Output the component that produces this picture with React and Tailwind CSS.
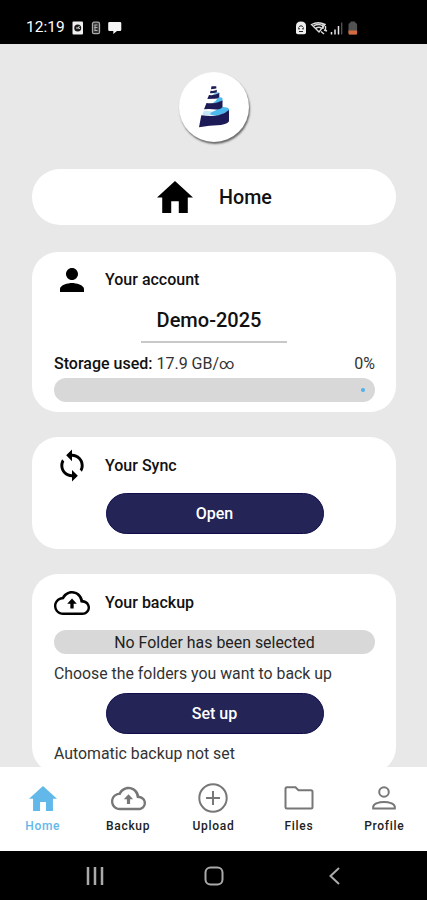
const cloud =
  'M19.35 10.04C18.67 6.59 15.64 4 12 4 9.11 4 6.6 5.64 5.35 8.04 2.34 8.36 0 10.91 0 14c0 3.31 2.69 6 6 6h13c2.76 0 5-2.24 5-5 0-2.64-2.05-4.78-4.65-4.96zM19 18.4H6c-2.4 0-4.4-2-4.4-4.4 0-2.25 1.63-4.1 3.86-4.35l1.07-.11.5-.95C8.08 6.76 9.94 5.6 12 5.6c2.62 0 4.88 1.86 5.39 4.63l.3 1.5 1.53.11c1.76.1 3.18 1.41 3.18 3.16 0 1.85-1.55 3.4-3.4 3.4z'

function CloudUp({ className }) {
  return (
    <svg viewBox="0 0 24 24" fill="currentColor" className={className}>
      <path d={cloud} />
      <path d="M8.800 12.500 12 9l3.200 3.500h-2.100v3.200h-2.200v-3.200z" />
    </svg>
  )
}

function House({ className }) {
  return (
    <svg viewBox="2 3 20 17" preserveAspectRatio="none" fill="currentColor" className={className}>
      <path d="M9.900 20v-6.200h4.200V20h5v-8.300H22L12 3 2 11.700h2.900V20z" />
    </svg>
  )
}

function Person({ className }) {
  return (
    <svg viewBox="0 0 24 24" fill="currentColor" className={className}>
      <path d="M12 12c2.210 0 4-1.790 4-4s-1.790-4-4-4-4 1.790-4 4 1.790 4 4 4zm0 2c-2.670 0-8 1.340-8 4v2h16v-2c0-2.660-5.330-4-8-4z" />
    </svg>
  )
}

function Sync({ className }) {
  return (
    <svg viewBox="0 0 24 24" fill="currentColor" className={className}>
      <path d="M12 4V1L8 5l4 4V6c3.310 0 6 2.690 6 6 0 1.010-.25 1.970-.7 2.800l1.460 1.460C19.540 15.030 20 13.570 20 12c0-4.420-3.580-8-8-8zm0 14c-3.310 0-6-2.690-6-6 0-1.010.25-1.970.7-2.800L5.240 7.740C4.460 8.970 4 10.430 4 12c0 4.420 3.580 8 8 8v3l4-4-4-4v3z" />
    </svg>
  )
}

function Logo() {
  return (
    <svg viewBox="0 0 70 70" className="size-[70px]">
      <path fill="#c5e6f6" d="M25 38.700L34 39.500L38 43.300H23z" />
      <path fill="#4db9ec" d="M32 40.500Q37 39 41 35.300Q48 34.500 50 37V38.800L39 44L31 42.500z" />
      <path fill="#4db9ec" d="M34 30.500Q37.500 29 39 25.500Q42.500 24.800 43.500 26.500V29.300L37 31.500z" />
      <path fill="#7cc3e8" d="M34 22.500L37 20L40.300 20.500V22L36 23.500z" />
      <path fill="#1d1b57" d="M22.300 43.300Q33 44.500 39.500 43.300Q46 41.500 50 38V49.300Q48.500 52 42 53Q30 53.500 20 55.300z" />
      <path fill="#1d1b57" d="M27.500 31Q37 32 43.500 28.500V35.300Q41 37.800 37 37.500Q31 36.500 25 37.200z" />
      <path fill="#1d1b57" d="M30 23Q36 23.700 40.300 21V25.300Q38 27 35 26.800L28.300 27z" />
      <path fill="#1d1b57" d="M32.500 14.300h4.800v2.200l-5.300.8zM31.500 18.800q4 .5 6.300-1v2.500q-3 1.300-6.800 1z" />
    </svg>
  )
}

function StatusBar() {
  return (
    <header className="flex h-[44px] shrink-0 items-center bg-black pl-[26px] pr-[69px] pt-[11px] text-white">
      <span className="w-[39px] text-[15.500px]">12:19</span>
      <svg viewBox="0 0 50 14" className="ml-[7px] h-[14px] w-[50px]">
        <rect x="0.500" y="0.500" width="10.500" height="13" rx="1" fill="#f0f0f0" />
        <circle cx="5.700" cy="7" r="3.500" fill="#1a1a1a" />
        <path d="M4 7h2l1.500-2M6 7l2 .5" stroke="#ddd" fill="none" />
        <rect x="20.500" y="1.200" width="7" height="11.500" rx="1.500" fill="#333" stroke="#aaa" strokeWidth="1.300" />
        <path d="M22.500 4h3M22.500 6.500h3M22.500 9.500h3M23 4v6" stroke="#bbb" strokeWidth="0.900" />
        <path d="M37.500 1h10.500q1.300 0 1.300 1.300v6.400q0 1.300-1.300 1.300h-3l-3.700 3v-3h-3.800q-1.300 0-1.300-1.300V2.300q0-1.300 1.300-1.300z" fill="#f5f5f5" />
      </svg>
      <svg viewBox="0 0 63 14" className="ml-auto h-[14px] w-[63px]">
        <path d="M1 5Q1 .5 6 .5T11 5v6.500q0 1.800-1.800 1.800H2.800Q1 13.300 1 11.500z" fill="#eee" />
        <path d="M3.500 6.500q2.500-3.500 5 0M3 7.800h2M7 7.800h2M4 10.500h4" stroke="#222" fill="none" />
        <path d="M16.500 3.500Q23 0 30 3.500L24 11zM19 4.700q5-2.500 9 .3M21 7.200q3-2 5.500 0" fill="none" stroke="#ddd" strokeWidth="1.400" />
        <path d="M28 3v5M30.500 5v5M26 10.500l3 2.500M29 9l3 1" stroke="#ddd" strokeWidth="1.400" />
        <path d="M36.500 11v2.500M40 8.500v5M43.500 5v8.500" stroke="#e8e8e8" strokeWidth="1.500" />
        <path d="M46.700 1.500v12" stroke="#555" strokeWidth="1.300" />
        <path d="M53.500 3.500q0-1.500 1.500-1.500l.8-1.500h4l.8 1.500q1.500 0 1.500 1.500v8.500q0 1.500-1.500 1.500H55q-1.500 0-1.500-1.500z" fill="#525252" />
        <path d="M53.500 9.500h8.600v3q0 1-1 1h-6.600q-1 0-1-1z" fill="#d56a40" />
      </svg>
    </header>
  )
}

function CardTitle({ icon, children }) {
  return (
    <div className="flex items-center gap-[15px]">
      {icon}
      <h2 className="text-[16px] font-medium leading-5">{children}</h2>
    </div>
  )
}

function Action({ children }) {
  return (
    <button className="ml-[51.500px] flex h-[41px] w-[218px] items-center justify-center rounded-full border border-[#100d4d] bg-[#242556] text-[16px] font-medium text-white">
      {children}
    </button>
  )
}

const tabs = [
  { label: 'Home', icon: <House className="h-[25px] w-[28px]" /> },
  { label: 'Backup', icon: <CloudUp className="size-[35px]" /> },
  {
    label: 'Upload',
    icon: (
      <svg viewBox="0 0 30 30" className="size-[30px]" fill="none" stroke="currentColor" strokeWidth="2">
        <circle cx="15" cy="15" r="13.700" />
        <path d="M15 8v14M8 15h14" />
      </svg>
    ),
  },
  {
    label: 'Files',
    icon: (
      <svg viewBox="0 0 30 24" className="h-[24px] w-[30px]" fill="none" stroke="currentColor" strokeWidth="2">
        <path d="M3 1.200h8.500l3 3H27q1.500 0 1.500 1.500V21q0 1.500-1.500 1.500H3q-1.500 0-1.500-1.500V2.700Q1.500 1.200 3 1.200z" />
      </svg>
    ),
  },
  {
    label: 'Profile',
    icon: (
      <svg viewBox="0 0 24 24" className="size-[24px]" fill="none" stroke="currentColor" strokeWidth="2">
        <circle cx="12" cy="6" r="4.800" />
        <path d="M1.200 22.500V20.500C1.800 17.500 7 15.900 12 15.900s10.200 1.600 10.800 4.600v2z" />
      </svg>
    ),
  },
]

export default function App() {
  return (
    <div className="flex h-[900px] w-[427px] flex-col overflow-hidden bg-black font-[Roboto,sans-serif] text-[#111]">
      <StatusBar />
      <main className="flex min-h-0 flex-1 flex-col overflow-hidden bg-[#e8e8e8] pl-8 pr-[31px] pt-[28px]">
        <div className="mx-auto size-[70px] shrink-0 rounded-full bg-white shadow-[1px_2px_2px_rgba(0,0,0,0.55)]">
          <Logo />
        </div>
        <section className="mt-[27px] flex h-[56px] shrink-0 items-center rounded-[28px] bg-white pl-[125px]">
          <House className="h-[32px] w-[36px] text-black" />
          <h1 className="ml-[26px] pt-[2px] text-[19.700px] font-medium">Home</h1>
        </section>
        <section className="mt-[27px] h-[160px] shrink-0 rounded-[26px] bg-white pl-[22px] pr-[21px] pt-[10px]">
          <CardTitle icon={<Person className="size-[36px] text-black" />}>Your account</CardTitle>
          <div className="ml-[87px] mt-[8px] w-[146px] border-b-2 border-[#c8c8c8] pb-[7px] pr-[10px] text-center text-[20px] font-medium leading-[28px]">
            Demo-2025
          </div>
          <div className="mt-[11px] flex justify-between text-[16px] leading-5">
            <p>
              <span className="font-medium">Storage used:</span> <span className="text-[#333]">17.9 GB/<span className="text-[15px]">∞</span></span>
            </p>
            <span className="text-[#333]">0%</span>
          </div>
          <div className="mt-[4px] flex h-6 items-center justify-end rounded-full bg-[#d8d8d8] pr-[10px]">
            <span className="size-[4px] rounded-full bg-[#4eb0e8]" />
          </div>
        </section>
        <section className="mt-[25px] h-[112px] shrink-0 rounded-[26px] bg-white pl-[22px] pr-[21px] pt-[11px]">
          <CardTitle icon={<Sync className="h-[35px] w-[36px] text-black" />}>Your Sync</CardTitle>
          <div className="mt-[10px]">
            <Action>Open</Action>
          </div>
        </section>
        <section className="mt-[25px] h-[199px] shrink-0 rounded-[26px] bg-white pl-[22px] pr-[21px] pt-[11px]">
          <CardTitle icon={<CloudUp className="size-[36px] text-black" />}>Your backup</CardTitle>
          <div className="mt-[9px] h-6 rounded-full bg-[#d8d8d8] text-center text-[15.900px] leading-[25px] text-[#222]">
            No Folder has been selected
          </div>
          <p className="mb-[9px] mt-[10px] text-[15.850px] leading-5 text-[#333]">Choose the folders you want to back up</p>
          <Action>Set up</Action>
          <p className="mt-[10px] text-[15.850px] leading-5 text-[#333]">Automatic backup not set</p>
        </section>
      </main>
      <nav className="grid h-[84px] shrink-0 grid-cols-5 bg-white pt-[14px]">
        {tabs.map((tab, i) => (
          <div key={tab.label} className={i === 0 ? 'flex flex-col items-center text-[#63b8ea]' : 'flex flex-col items-center text-[#777]'}>
            <div className="flex h-[34px] items-center">{tab.icon}</div>
            <span className={i === 0 ? 'mt-[3px] text-[12px] font-medium leading-[17px] tracking-[0.7px]' : 'mt-[3px] text-[12px] font-medium leading-[17px] tracking-[0.7px] text-[#222]'}>
              {tab.label}
            </span>
          </div>
        ))}
      </nav>
      <footer className="flex h-[49px] shrink-0 items-center justify-between bg-black pl-[86px] pr-[87px] text-[#aaa]">
        <svg viewBox="0 0 18 20" className="h-5 w-[18px]" stroke="currentColor" strokeWidth="2.500">
          <path d="M2 1v18M9 1v18M16 1v18" />
        </svg>
        <svg viewBox="0 0 20 20" className="mr-1 size-5" fill="none" stroke="currentColor" strokeWidth="2">
          <rect x="1.500" y="1.500" width="17" height="17" rx="5" />
        </svg>
        <svg viewBox="0 0 12 20" className="h-5 w-3" fill="none" stroke="currentColor" strokeWidth="2">
          <path d="M11 2 2.500 10 11 18" />
        </svg>
      </footer>
    </div>
  )
}
